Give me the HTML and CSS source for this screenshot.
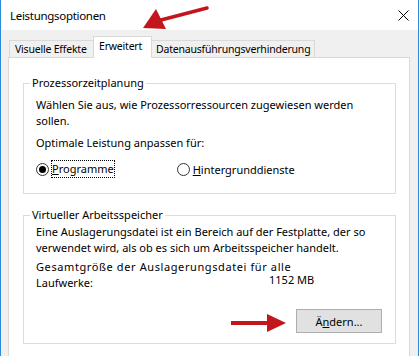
FILE: index.html
```html
<!DOCTYPE html>
<html lang="de">
<head>
    <meta charset="UTF-8">
    <meta name="viewport" content="width=device-width, initial-scale=1.0">
    <title>Leistungsoptionen</title>
    <link rel="stylesheet" href="styles.css">
</head>
<body>
    <div class="window">
        <div class="titlebar">
            <span class="title">Leistungsoptionen</span>
            <svg class="close" width="11" height="11" viewBox="0 0 11 11">
                <path d="M0.5 0.5 L10.5 10.5 M10.5 0.5 L0.5 10.5" stroke="#000" stroke-width="1" fill="none"/>
            </svg>
        </div>

        <div class="main">
            <div class="tabs">
                <div class="tab tab-visual">Visuelle Effekte</div>
                <div class="tab tab-advanced active">Erweitert</div>
                <div class="tab tab-dep">Datenausführungsverhinderung</div>
            </div>

            <div class="panel">
                <fieldset class="group first">
                    <legend>Prozessorzeitplanung</legend>
                    <p class="text">Wählen Sie aus, wie Prozessorressourcen zugewiesen werden sollen.</p>
                    <p class="text gap">Optimale Leistung anpassen für:</p>
                    <div class="radios">
                        <label class="radio">
                            <span class="dot checked"></span>
                            <span class="focus"><u>P</u>rogramme</span>
                        </label>
                        <label class="radio second">
                            <span class="dot"></span>
                            <span><u>H</u>intergrunddienste</span>
                        </label>
                    </div>
                </fieldset>

                <fieldset class="group second-group">
                    <legend>Virtueller Arbeitsspeicher</legend>
                    <p class="text">Eine Auslagerungsdatei ist ein Bereich auf der Festplatte, der so verwendet wird, als ob es sich um Arbeitsspeicher handelt.</p>
                    <div class="size-row">
                        <span class="size-label"><span class="wide">Gesamtgröße der Auslagerungsdatei für alle</span><br>Laufwerke:</span>
                        <span class="size-value">1152 MB</span>
                    </div>
                    <div class="actions">
                        <button class="btn">Ä<u>n</u>dern...</button>
                    </div>
                </fieldset>
            </div>
        </div>

        <!-- red hint arrows -->
        <svg class="arrow arrow-top" width="70" height="30" viewBox="0 0 70 30">
            <path d="M66 3 L20 15" stroke="#c3161c" stroke-width="3.5" stroke-linecap="round" fill="none"/>
            <path d="M2 23 L15 4 L25 24 Z" fill="#c3161c"/>
        </svg>
        <svg class="arrow arrow-bottom" width="60" height="20" viewBox="0 0 60 20">
            <path d="M2 10 L40 10" stroke="#c3161c" stroke-width="4" fill="none"/>
            <path d="M38 1 L57 10 L38 19 Z" fill="#c3161c"/>
        </svg>
    </div>
</body>
</html>
```

FILE: styles.css
```css
body {
    margin: 0;
    font-family: "Noto Sans", "Open Sans", sans-serif;
    font-size: 11px;
    color: #000;
}
.window {
    position: relative;
    width: 419px;
    height: 356px;
    box-sizing: border-box;
    border-left: 1px solid #2b8ad9;
    border-right: 1px solid #2b8ad9;
    background-color: #f0f0f0;
    overflow: hidden;
}
.titlebar {
    height: 30px;
    background-color: #fff;
    display: flex;
    align-items: center;
    justify-content: space-between;
    padding: 0 9px 0 9px;
}
.title {
    font-size: 11.5px;
    letter-spacing: -0.3px;
}
.main {
    padding: 6px 8px 0 7px;
}
.tabs {
    display: flex;
    align-items: flex-end;
    height: 21px;
    padding-left: 1px;
    position: relative;
    z-index: 1;
}
.tab {
    box-sizing: border-box;
    height: 17px;
    line-height: 17px;
    padding-left: 5px;
    font-size: 10.5px;
    letter-spacing: -0.2px;
    white-space: nowrap;
    border: 1px solid #d9d9d9;
    border-bottom: none;
    margin-right: -1px;
}
.tab-visual {
    width: 85px;
}
.tab-advanced {
    width: 59px;
}
.tab-dep {
    width: 164px;
    padding-left: 4px;
}
.tab.active {
    height: 22px;
    line-height: 19px;
    background-color: #fff;
    margin-bottom: -1px;
}
.panel {
    background-color: #fff;
    border: 1px solid #d9d9d9;
    height: 320px;
    padding: 17px 13px 0 14px;
}
.group {
    margin: 0;
    border: 1px solid #dcdcdc;
    padding: 6px 12px 15px 12px;
}
.group legend {
    margin-left: -6px;
    padding: 0 2px;
    line-height: 16px;
}
.second-group {
    margin-top: 13px;
    padding-top: 1px;
    padding-bottom: 10px;
}
.text {
    margin: 0;
    line-height: 16px;
}
.text.gap {
    margin-top: 6px;
}
.radios {
    display: flex;
    margin-top: 9px;
    height: 18px;
    align-items: center;
}
.radio {
    display: flex;
    align-items: center;
    gap: 3px;
}
.radio.second {
    margin-left: 63px;
}
.dot {
    width: 11px;
    height: 11px;
    border: 1px solid #333;
    border-radius: 50%;
    display: flex;
    align-items: center;
    justify-content: center;
}
.dot.checked::after {
    content: "";
    width: 7px;
    height: 7px;
    border-radius: 50%;
    background-color: #000;
}
.focus {
    outline: 1px dotted #000;
    line-height: 16px;
}
.size-row {
    display: flex;
    margin-top: 3px;
    align-items: flex-end;
}
.size-label {
    width: 232px;
    line-height: 16px;
    white-space: nowrap;
}
.size-label .wide {
    letter-spacing: 0.6px;
}
.size-value {
    line-height: 16px;
    margin-left: 1px;
    margin-bottom: 3px;
}
.actions {
    display: flex;
    justify-content: flex-end;
    margin-top: 18px;
    padding-right: 1px;
}
.btn {
    width: 86px;
    height: 24px;
    font-family: inherit;
    font-size: 11px;
    background-color: #e1e1e1;
    border: 1px solid #adadad;
    padding: 0;
}
.arrow {
    position: absolute;
}
.arrow-top {
    left: 140px;
    top: 5px;
}
.arrow-bottom {
    left: 228px;
    top: 313px;
}
```
